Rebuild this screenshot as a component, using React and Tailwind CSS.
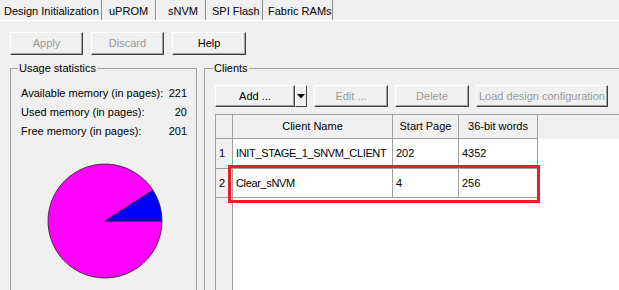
import React from 'react'

const TABS = [
  { label: 'Design Initialization', w: 'w-[102px]', pl: 'pl-[4px]' },
  { label: 'uPROM', w: 'w-[54px]', pl: 'pl-[7px]' },
  { label: 'sNVM', w: 'w-[50px]', pl: 'pl-[11px]', active: true },
  { label: 'SPI Flash', w: 'w-[57px]', pl: 'pl-[6px]' },
  { label: 'Fabric RAMs', w: 'w-[70px]', pl: 'pl-[5px]' },
]

const STATS = [
  ['Available memory (in pages):', '221'],
  ['Used memory (in pages):', '20'],
  ['Free memory (in pages):', '201'],
]

const ROWS = [
  ['1', 'INIT_STAGE_1_SNVM_CLIENT', '202', '4352', 'h-[30px]'],
  ['2', 'Clear_sNVM', '4', '256', 'h-[29px]'],
]

function Button({ children, w, disabled, h = 'h-[23px]' }) {
  return (
    <div
      className={`${w} ${h} shrink-0 flex items-center justify-center bg-[#f0f0f0] border-t border-l border-white border-b border-r border-b-[#404040] border-r-[#404040] shadow-[inset_-1px_-1px_0_#a0a0a0] ${
        disabled ? 'text-[#9a9a9a]' : 'text-black'
      }`}
    >
      {children}
    </div>
  )
}

function PieChart() {
  return (
    <svg width="118" height="118" viewBox="0 0 118 118">
      <path d="M59,59 L107,28.3 A57,57 0 1,0 116,59 Z" fill="#ff00ff" stroke="#202020" strokeWidth="0.8" />
      <path d="M59,59 L116,59 A57,57 0 0,0 107,28.3 Z" fill="#0000ff" stroke="#202020" strokeWidth="0.8" />
    </svg>
  )
}

export default function App() {
  return (
    <div className="w-[619px] h-[290px] overflow-hidden bg-[#f0f0f0] text-[11px] text-black font-['Liberation_Sans',Arial,sans-serif] relative">
      {/* Tabs */}
      <div className="flex h-[21px] border-b border-white">
        {TABS.map((t) => (
          <div
            key={t.label}
            className={`${t.w} ${t.pl} h-[20px] pt-[3px] flex items-center shrink-0 border-r border-[#8a8a8a] ${
              t.active ? 'border-l border-l-white' : ''
            }`}
          >
            {t.label}
          </div>
        ))}
      </div>

      {/* Top buttons */}
      <div className="flex gap-[8px] pl-[10px] mt-[11px]">
        <Button w="w-[73px]" disabled>Apply</Button>
        <Button w="w-[73px]" disabled>Discard</Button>
        <Button w="w-[74px]">Help</Button>
      </div>

      <div className="flex gap-[7px] pl-[10px] mt-[6px]">
        {/* Usage statistics */}
        <fieldset className="w-[187px] h-[240px] shrink-0 border border-[#a0a0a0] pl-[10px] pr-[9px]">
          <legend className="-ml-[3px] px-[1px] leading-[14px]">Usage statistics</legend>
          <div className="pt-[9px]">
            {STATS.map(([label, value]) => (
              <div key={label} className="flex justify-between leading-[19px]">
                <span>{label}</span>
                <span>{value}</span>
              </div>
            ))}
          </div>
          <div className="mt-[21px] ml-[25px]">
            <PieChart />
          </div>
        </fieldset>

        {/* Clients */}
        <fieldset className="w-[440px] h-[240px] shrink-0 border border-[#a0a0a0] pl-[10px]">
          <legend className="-ml-[2px] px-[1px] leading-[14px]">Clients</legend>
          <div className="pt-[10px] flex">
            <Button w="w-[80px]" h="h-[22px]">Add ...</Button>
            <div className="w-[12px] h-[22px] flex items-center justify-center bg-[#f0f0f0] border-t border-l border-white border-b border-r border-b-[#404040] border-r-[#404040]">
              <svg width="8" height="5" viewBox="0 0 8 5">
                <path d="M0,0 L8,0 L4,4.5 Z" fill="#000" />
              </svg>
            </div>
            <div className="flex gap-[7px] ml-[7px]">
              <Button w="w-[74px]" h="h-[22px]" disabled>Edit ...</Button>
              <Button w="w-[74px]" h="h-[22px]" disabled>Delete</Button>
              <Button w="w-[132px]" h="h-[22px]" disabled>Load design configuration</Button>
            </div>
          </div>

          {/* Table */}
          <div className="mt-[7px] h-[200px] flex flex-col border-t border-l border-[#a0a0a0] bg-white">
            <div className="flex h-[24px] bg-[#f0f0f0] shrink-0">
              <div className="w-[17px] border-r border-b border-[#a0a0a0]" />
              <div className="w-[160px] flex items-center justify-center border-r border-b border-[#a0a0a0]">Client Name</div>
              <div className="w-[66px] flex items-center justify-center border-r border-b border-[#a0a0a0]">Start Page</div>
              <div className="w-[79px] flex items-center justify-center border-r border-b border-[#a0a0a0]">36-bit words</div>
              <div className="flex-1" />
            </div>
            <div className="flex flex-1">
              <div className="w-[17px] bg-[#f0f0f0] border-r border-[#a0a0a0] shrink-0">
                {ROWS.map(([n, , , , h]) => (
                  <div key={n} className={`${h} flex items-center pl-[3px] border-b border-[#a0a0a0]`}>{n}</div>
                ))}
              </div>
              <div className="flex-1">
                {ROWS.map(([n, name, start, words, h]) => (
                  <div key={n} className={`${h} flex`}>
                    <div className="w-[160px] flex items-center pl-[3px] tracking-[-0.35px] whitespace-nowrap overflow-hidden border-r border-b border-[#a0a0a0]">{name}</div>
                    <div className="w-[66px] flex items-center pl-[3px] border-r border-b border-[#a0a0a0]">{start}</div>
                    <div className="w-[79px] flex items-center pl-[3px] border-r border-b border-[#a0a0a0]">{words}</div>
                  </div>
                ))}
              </div>
            </div>
          </div>
        </fieldset>
      </div>

      {/* Highlight annotation */}
      <div className="absolute left-[228px] top-[165px] w-[312px] h-[38px] border-[3px] border-[#ed1c24]" />
    </div>
  )
}
